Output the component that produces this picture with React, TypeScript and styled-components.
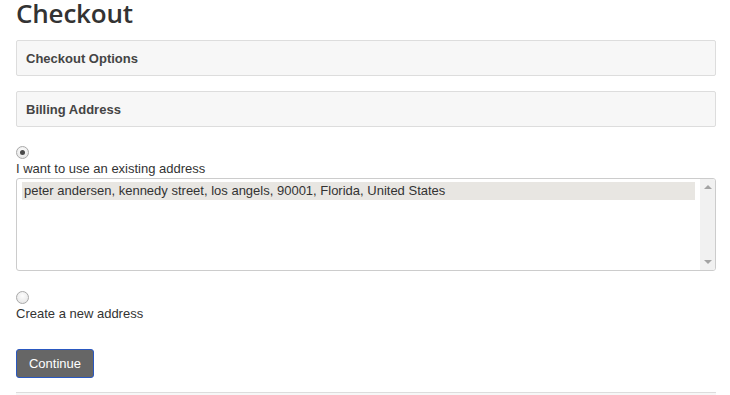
import styled, { createGlobalStyle } from 'styled-components'

const GlobalStyle = createGlobalStyle`
  body {
    margin: 0;
    background: #fff;
    font-family: "Liberation Sans", Arial, sans-serif;
    font-size: 13px;
    color: #333;
  }
`

const Page = styled.div`
  width: 700px;
  padding: 0 14px 0 16px;
  height: 395px;
  overflow: hidden;
`

const Title = styled.h1`
  margin: 0 0 12px;
  height: 28px;
  font-family: "Open Sans", sans-serif;
  font-weight: 600;
  font-size: 26px;
  line-height: 27px;
  color: #333;
  letter-spacing: -0.2px;
`

const Panel = styled.div<{ $open?: boolean }>`
  border: 1px solid #ddd;
  border-radius: 2px;
  background: #f7f7f7;
  margin-bottom: ${p => (p.$open ? '19px' : '15px')};
`

const PanelHeading = styled.div`
  height: 34px;
  display: flex;
  align-items: center;
  padding-left: 9px;
  font-weight: bold;
  font-size: 13px;
  color: #444;
`

const Choice = styled.div`
  display: flex;
  flex-direction: column;
  align-items: flex-start;
`

const Radio = styled.input`
  appearance: none;
  margin: 0;
  width: 13px;
  height: 13px;
  border-radius: 50%;
  border: 1px solid #a9a9a9;
  background: radial-gradient(circle at 50% 35%, #fdfdfd 0%, #e2e2e2 100%);
  box-sizing: border-box;
  display: grid;
  place-items: center;

  &:checked::after {
    content: '';
    width: 5px;
    height: 5px;
    border-radius: 50%;
    background: #4a4a4a;
  }
`

const ChoiceLabel = styled.label`
  line-height: 17px;
  margin-top: 1px;
`

const ListBox = styled.div`
  margin-top: 1px;
  height: 91px;
  border: 1px solid #ccc;
  border-radius: 3px;
  display: flex;
  overflow: hidden;
`

const Options = styled.div`
  flex: 1;
  padding: 3px 5px 0 5px;
`

const Option = styled.div<{ $selected?: boolean }>`
  height: 18px;
  line-height: 18px;
  padding-left: 2px;
  background: ${p => (p.$selected ? '#e8e6e2' : 'transparent')};
  white-space: nowrap;
`

const Scrollbar = styled.div`
  width: 15px;
  background: #f1f1f1;
  display: flex;
  flex-direction: column;
  justify-content: space-between;
  align-items: center;
  padding: 6px 0;
`

const Arrow = styled.div<{ $down?: boolean }>`
  width: 0;
  height: 0;
  border-left: 4px solid transparent;
  border-right: 4px solid transparent;
  ${p => (p.$down ? 'border-top: 4px solid #a3a3a3;' : 'border-bottom: 4px solid #a3a3a3;')}
`

const NewChoice = styled(Choice)`
  margin-top: 20px;
`

const Button = styled.button`
  margin-top: 27px;
  width: 78px;
  height: 29px;
  background: #666;
  color: #fff;
  border: 1px solid #2a58c0;
  border-radius: 3px;
  font-family: "Liberation Sans", Arial, sans-serif;
  font-size: 13px;
  padding: 0;
`

const NextPanel = styled.div`
  margin-top: 14px;
  border-top: 1px solid #ddd;
  background: #f7f7f7;
  height: 20px;
`

export default function App() {
  return (
    <Page>
      <GlobalStyle />
      <Title>Checkout</Title>
      <Panel>
        <PanelHeading>Checkout Options</PanelHeading>
      </Panel>
      <Panel $open>
        <PanelHeading>Billing Address</PanelHeading>
      </Panel>
      <Choice>
        <Radio type="radio" name="address" defaultChecked />
        <ChoiceLabel>I want to use an existing address</ChoiceLabel>
      </Choice>
      <ListBox>
        <Options>
          <Option $selected>peter andersen, kennedy street, los angels, 90001, Florida, United States</Option>
        </Options>
        <Scrollbar>
          <Arrow />
          <Arrow $down />
        </Scrollbar>
      </ListBox>
      <NewChoice>
        <Radio type="radio" name="address" />
        <ChoiceLabel>Create a new address</ChoiceLabel>
      </NewChoice>
      <Button>Continue</Button>
      <NextPanel />
    </Page>
  )
}
